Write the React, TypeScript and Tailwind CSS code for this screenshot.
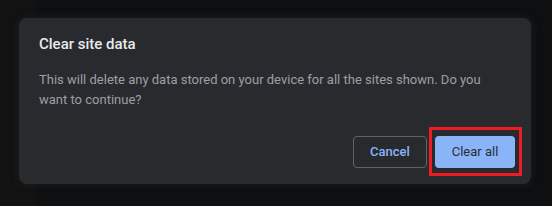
export default function App() {
  return (
    <div className="h-[206px] w-[552px] overflow-hidden bg-[linear-gradient(to_right,#121212_36px,#0e0f11_36px)] pl-[19px] pt-[18px] font-['Roboto','Liberation_Sans',sans-serif]">
      <div className="flex w-[512px] flex-col rounded-lg bg-[#292a2d] pb-4 pl-5 pr-4 pt-4 shadow-[0_0_6px_2px_rgba(30,31,34,0.6)]">
        <h2 className="text-[15px] font-medium leading-5 text-[#e8eaed]">Clear site data</h2>
        <p className="mt-4 pr-4 text-[13px] leading-5 text-[#9aa0a6]">
          This will delete any data stored on your device for all the sites shown. Do you want to continue?
        </p>
        <div className="mt-[26px] flex justify-end gap-2">
          <button className="h-8 w-[74px] rounded border border-[#5f6368] text-[13px] font-medium text-[#8ab4f8]">
            Cancel
          </button>
          <button className="relative h-8 w-20 rounded bg-[#8ab4f8] text-[13px] font-normal text-[#2a2c33]">
            Clear all
            <span className="pointer-events-none absolute -bottom-[8px] -left-[6px] -right-[7px] -top-[9px] border-[3px] border-[#ed1c24]" />
          </button>
        </div>
      </div>
    </div>
  );
}
